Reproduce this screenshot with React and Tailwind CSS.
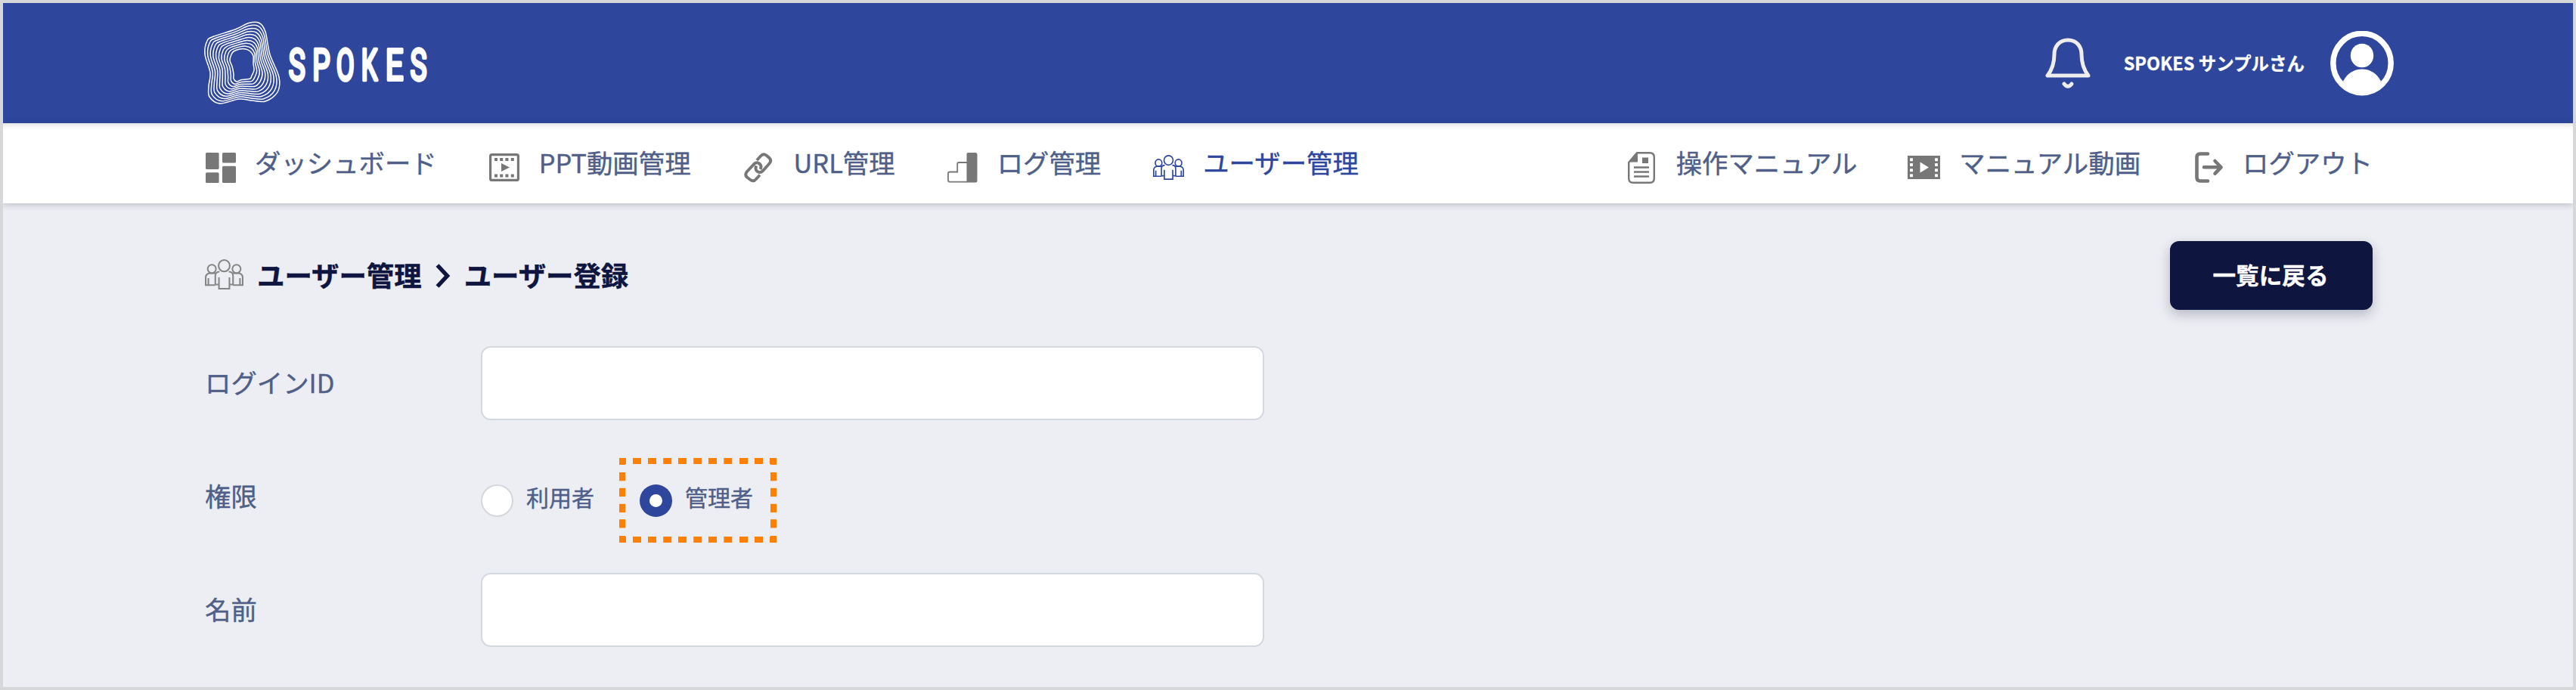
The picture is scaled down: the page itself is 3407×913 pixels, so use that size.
const dashX = [18, 38, 58.2, 78, 98.2, 118, 138.3, 159, 179];
const dashY = [19, 39.8, 60.8, 81.2];

const RINGS = 10;
const OUTER = [[3, 24], [12, 18], [40, 9], [58, 0.5], [72, 0.5], [80, 12], [86, 42], [98, 72], [96, 92], [80, 104], [62, 103], [45, 101], [20, 107], [6, 98], [5, 84], [7, 66], [0, 42]];
const INNER = [[35, 42], [38, 38], [46, 35], [54, 35], [60, 38], [64, 44], [64, 54], [65, 63], [62, 70], [60, 74], [54, 75], [47, 76], [42, 78], [38, 74], [38, 68], [36, 58], [33, 50]];

function ringPath(t) {
  const pts = OUTER.map(([x, y], i) => [x + (INNER[i][0] - x) * t, y + (INNER[i][1] - y) * t]);
  const n = pts.length;
  let d = `M${pts[0][0].toFixed(2)} ${pts[0][1].toFixed(2)}`;
  for (let i = 0; i < n; i++) {
    const p0 = pts[(i + n - 1) % n], p1 = pts[i], p2 = pts[(i + 1) % n], p3 = pts[(i + 2) % n];
    d += `C${(p1[0] + (p2[0] - p0[0]) / 6).toFixed(2)} ${(p1[1] + (p2[1] - p0[1]) / 6).toFixed(2)} ${(p2[0] - (p3[0] - p1[0]) / 6).toFixed(2)} ${(p2[1] - (p3[1] - p1[1]) / 6).toFixed(2)} ${p2[0].toFixed(2)} ${p2[1].toFixed(2)}`;
  }
  return d + "Z";
}

const WORDMARK = [
  ["S", 12.8, 0.65],
  ["P", 44.9, 0.65],
  ["O", 76.8, 0.61],
  ["K", 108.4, 0.6],
  ["E", 141.8, 0.74],
  ["S", 173.5, 0.65],
];

function Logo() {
  return (
    <div className="flex items-center">
      <svg width="102" height="110" viewBox="-1 -1 102 110" className="overflow-visible" fill="none" stroke="#fff" strokeWidth="1.5">
        {Array.from({ length: RINGS }, (_, i) => <path key={i} d={ringPath(i / (RINGS - 1))} />)}
      </svg>
      <svg width="200" height="100" viewBox="0 0 200 100" className="ml-[8px] overflow-visible">
        <g fill="#fff" stroke="#fff" strokeWidth="3.600" strokeLinejoin="round" fontFamily="Roboto, sans-serif" fontWeight="400" fontSize="57" textAnchor="middle">
          {WORDMARK.map(([c, x, s], i) => (
            <text key={i} vectorEffect="non-scaling-stroke" transform={`translate(${x} 71.8) scale(${s} 1)`}>{c}</text>
          ))}
        </g>
      </svg>
    </div>
  );
}

function BellIcon() {
  return (
    <svg width="60" height="68" viewBox="0 0 60 68" fill="none" stroke="#eeeeee" strokeWidth="5" strokeLinecap="round" strokeLinejoin="round">
      <path d="M30 3C18 3 12 12 12 22C12 33 10 41 3 50H57C50 41 48 33 48 22C48 12 42 3 30 3Z" />
      <path d="M25 61Q30 67.500 35 61" />
    </svg>
  );
}

function AvatarIcon() {
  return (
    <svg width="84" height="86" viewBox="0 0 84 86">
      <ellipse cx="42" cy="42.500" rx="38.200" ry="39.200" fill="none" stroke="#fff" strokeWidth="7.500" />
      <ellipse cx="42" cy="32.500" rx="15.200" ry="15.800" fill="#fff" />
      <path d="M17 66.500C22 56.500 31 50.500 42 50.500S62 56.500 67 66.500C61 75.500 52 80.500 42 80.500S23 75.500 17 66.500Z" fill="#fff" />
    </svg>
  );
}

function DashboardIcon() {
  return (
    <svg width="40" height="40" viewBox="0 0 40 40" fill="#777">
      <rect width="17.600" height="22" rx="1.500" />
      <rect y="26.300" width="17.600" height="13.700" rx="1.500" />
      <rect x="22" width="18" height="13.500" rx="1.500" />
      <rect x="22" y="17.800" width="18" height="22.200" rx="1.500" />
    </svg>
  );
}

function SlideIcon() {
  return (
    <svg width="40" height="37" viewBox="0 0 40 37" fill="#777">
      <rect x="1.600" y="1.600" width="36.800" height="33.800" rx="2" fill="none" stroke="#777" strokeWidth="3.200" />
      {[7, 14.2, 21.4, 28.8].map((x) => (
        <g key={x}>
          <rect x={x} y="6" width="4" height="4" />
          <rect x={x} y="27.500" width="4" height="4" />
        </g>
      ))}
      <path d="M16 13V24L27 18.500Z" />
    </svg>
  );
}

function LinkIcon() {
  return (
    <svg width="38" height="40" viewBox="0 0 38 40" fill="none" stroke="#777" strokeWidth="3.900">
      <path d="M17 10L22 4.500Q25.500 .500 29.500 3.500L33.500 7Q37 10.500 33.500 14.500L24.500 24.500Q21 27.500 17.500 24.800Q14 21.500 16.500 17.500" />
      <path d="M21 29.500L16 35Q12.500 39 8.500 36L4 32.500Q.500 29 4 25L13.500 14.800Q17 11.800 20.500 14.500Q24 17.800 21.500 22" />
    </svg>
  );
}

function LogIcon() {
  return (
    <svg width="40" height="40" viewBox="0 0 40 40">
      <path d="M26 38.600H3Q1 38.600 1 36.600V27.500Q1 25.500 3 25.500H13.200V15Q13.200 13 15.200 13H26" fill="none" stroke="#777" strokeWidth="1.800" />
      <path d="M25.500 39.500V2Q25.500 0 27.500 0H37Q39.500 0 39.500 2.500V37Q39.500 39.500 37 39.500Z" fill="#777" />
    </svg>
  );
}

function UsersIcon({ className, width, height }) {
  return (
    <svg width={width} height={height} viewBox="0 0 50 40" preserveAspectRatio="none" className={className} fill="none" stroke="currentColor" strokeWidth="2">
      <ellipse cx="25" cy="8.600" rx="7.300" ry="7.600" />
      <ellipse cx="9" cy="12.800" rx="5.400" ry="5.600" />
      <ellipse cx="41" cy="12.800" rx="5.400" ry="5.600" />
      <path d="M13.500 33.500V22Q13.500 16.500 19 16.500M31 16.500Q36.500 16.500 36.500 22V33.500H31.800V39H18.200V33.500H13.500M18.200 24V39M31.800 24V39" />
      <path d="M13.500 18.800Q12.500 18.500 11 18.500H6.500Q1 19 1 24.500V34.200H13.500M4.500 25V34M36.500 18.800Q37.500 18.500 39 18.500H43.500Q49 19 49 24.500V34.200H36.500M45.500 25V34" />
    </svg>
  );
}

function ManualIcon() {
  return (
    <svg width="36" height="42" viewBox="0 0 36 42" fill="none" stroke="#777" strokeWidth="2.400">
      <path d="M12 1.200H29Q34.800 1.200 34.800 7V35Q34.800 40.800 29 40.800H7Q1.200 40.800 1.200 35V14Z" strokeLinejoin="round" />
      <path d="M13 1V13.500H1.500Z" fill="#777" stroke="none" />
      <rect x="19" y="7.500" width="8" height="7.500" fill="#777" stroke="none" />
      <path d="M8 20.500H28M8 26.500H28M8 32.500H28" />
    </svg>
  );
}

function FilmIcon() {
  return (
    <svg width="43" height="31" viewBox="0 0 43 31">
      <rect width="43" height="31" fill="#777" />
      {[3.2, 10, 17.2, 24.2].map((y) => (
        <g key={y} fill="#fff">
          <rect x="3" y={y} width="4" height="4" rx=".8" />
          <rect x="36" y={y} width="4" height="4" rx=".8" />
        </g>
      ))}
      <path d="M16.500 8.500V22.500L28 15.500Z" fill="#fff" />
    </svg>
  );
}

function LogoutIcon() {
  return (
    <svg width="38" height="41" viewBox="0 0 38 41" fill="none" stroke="#777" strokeWidth="4.600" strokeLinecap="round" strokeLinejoin="round">
      <path d="M17 2.500H7Q2.500 2.500 2.500 7V33.500Q2.500 38.500 7 38.500H17" />
      <path d="M12 20.300H34M26.500 12L34.500 20.300L26.500 28.600" />
    </svg>
  );
}

function NavItem({ icon, children, className = "" }) {
  return (
    <a className={`flex h-[106px] items-center whitespace-nowrap text-[34.4px] leading-none ${className}`}>
      <span className="flex shrink-0 pt-[11px]">{icon}</span>
      <span className="-mt-[4px] [-webkit-text-stroke:0.4px_currentColor]">{children}</span>
    </a>
  );
}

function Label({ children }) {
  return <label className="pb-[3px] [-webkit-text-stroke:0.4px_currentColor]">{children}</label>;
}

function TextField() {
  return <input className="h-[98px] w-[1036px] rounded-[13px] border-2 border-[#d3d8df] bg-white px-6 text-[32px] outline-none" />;
}

export default function App() {
  return (
    <div className="h-[913px] w-[3407px] overflow-hidden border-4 border-[#d6d7d8] bg-[#edeef3] font-['Noto_Sans_CJK_JP',sans-serif] text-[#4f5f88]">
      <header className="flex h-[159px] items-center justify-between bg-[#2e469c] pr-[237px] pl-[266px]">
        <Logo />
        <div className="flex items-center text-white">
          <BellIcon />
          <span className="ml-[44px] whitespace-nowrap text-[23.5px] leading-none font-bold [-webkit-text-stroke:0.3px_currentColor]">SPOKES サンプルさん</span>
          <span className="ml-[34px]"><AvatarIcon /></span>
        </div>
      </header>
      <nav className="flex h-[106px] justify-between bg-white pr-[265px] pl-[268px] shadow-[inset_0_10px_8px_-8px_rgba(0,0,0,0.14),0_2px_8px_rgba(40,45,80,0.25)]">
        <div className="flex">
          <NavItem icon={<DashboardIcon />} className="gap-[25px]">ダッシュボード</NavItem>
          <NavItem icon={<SlideIcon />} className="ml-[69px] gap-[26px]">PPT動画管理</NavItem>
          <NavItem icon={<LinkIcon />} className="ml-[70px] gap-[28px]">URL管理</NavItem>
          <NavItem icon={<LogIcon />} className="ml-[69px] gap-[26px]">ログ管理</NavItem>
          <NavItem icon={<UsersIcon width="41" height="33" />} className="ml-[69px] gap-[25px] text-[#2e469c]">ユーザー管理</NavItem>
        </div>
        <div className="flex">
          <NavItem icon={<ManualIcon />} className="gap-[28px]">操作マニュアル</NavItem>
          <NavItem icon={<FilmIcon />} className="ml-[67px] gap-[25px]">マニュアル動画</NavItem>
          <NavItem icon={<LogoutIcon />} className="ml-[72px] gap-[25px]">ログアウト</NavItem>
        </div>
      </nav>
      <main className="pr-[265px] pl-[267px]">
        <div className="flex items-center justify-between pt-[50px]">
          <h1 className="flex items-center text-[36.4px] leading-none font-bold whitespace-nowrap text-[#0e153f] [-webkit-text-stroke:0.4px_currentColor]">
            <UsersIcon width="51" height="40" className="-mt-[3px] text-[#858585]" />
            <span className="-mt-[3px] ml-[18px]">ユーザー管理</span>
            <svg width="20" height="32" viewBox="0 0 20 32" className="mx-[18px]" fill="none" stroke="#0e153f" strokeWidth="5.500">
              <path d="M2.500 2L15.500 16L2.500 30" />
            </svg>
            <span className="-mt-[3px]">ユーザー登録</span>
          </h1>
          <button className="h-[91px] w-[268px] rounded-[12px] bg-[#0e153f] pr-[2px] pb-[3px] text-[30.6px] leading-none font-bold text-white shadow-[0_6px_16px_rgba(20,25,60,0.25)] [-webkit-text-stroke:0.4px_currentColor]">一覧に戻る</button>
        </div>
        <form className="mt-[48px] grid grid-cols-[365px_1036px] grid-rows-[98px_98px_98px] items-center gap-y-[52px] text-[34.4px] leading-none">
          <Label>ログインID</Label>
          <TextField />
          <Label>権限</Label>
          <div className="flex items-center text-[30px]">
            <span className="mt-[11px] size-[43px] rounded-full border-2 border-[#d6d7dc] bg-white" />
            <span className="ml-[17px] [-webkit-text-stroke:0.4px_currentColor]">利用者</span>
            <div className="relative ml-[60px] flex items-center">
              <span className="mt-[11px] flex size-[43px] items-center justify-center rounded-full bg-[#2e469c]">
                <span className="size-[17px] rounded-full bg-white" />
              </span>
              <span className="ml-[17px] [-webkit-text-stroke:0.4px_currentColor]">管理者</span>
              <svg width="208" height="112" viewBox="0 0 208 112" className="absolute -top-[24px] -left-[27px]" fill="#ff7f00">
                {dashX.map((x) => (
                  <g key={x}>
                    <rect x={x} y="0" width="11" height="8" />
                    <rect x={x} y="104" width="11" height="8" />
                  </g>
                ))}
                {dashY.map((y) => (
                  <g key={y}>
                    <rect x="0" y={y} width="8" height="11.300" />
                    <rect x="200" y={y} width="8" height="11.300" />
                  </g>
                ))}
                <path d="M0 0H9V8H8V9H0ZM199 0H208V9H200V8H199ZM0 112V103H8V104H9V112ZM208 112H199V104H200V103H208Z" />
              </svg>
            </div>
          </div>
          <Label>名前</Label>
          <TextField />
        </form>
      </main>
    </div>
  );
}
